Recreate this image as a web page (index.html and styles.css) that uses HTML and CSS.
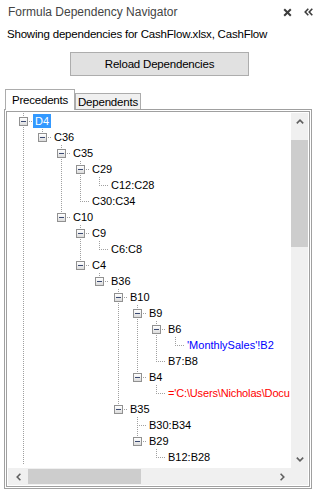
FILE: index.html
```html
<!DOCTYPE html>
<html>
<head>
<meta charset="utf-8">
<title>Formula Dependency Navigator</title>
<link rel="stylesheet" href="styles.css">
</head>
<body>
<div class="header">
  <div class="title">Formula Dependency Navigator</div>
  <div class="actions">
    <svg class="ico" width="9" height="9" viewBox="0 0 9 9"><path d="M1.2 1.2 L7.8 7.8 M7.8 1.2 L1.2 7.8" stroke="#3c3c3c" stroke-width="2" fill="none"/></svg>
    <svg class="ico" width="9" height="8" viewBox="0 0 9 8"><path d="M4.3 0.8 L1.2 4 L4.3 7.2 M8.3 0.8 L5.2 4 L8.3 7.2" stroke="#3c3c3c" stroke-width="1.6" fill="none"/></svg>
  </div>
</div>
<div class="info">Showing dependencies for CashFlow.xlsx, CashFlow</div>
<div class="btn">Reload Dependencies</div>
<div class="tabstrip">
  <div class="tab active">Precedents</div>
  <div class="tab inactive">Dependents</div>
</div>
<div class="panel">
  <div class="tree">
    <div class="content">
      <div class="row"><i class="c t"><b class="tg"></b></i><span class="lbl sel">D4</span></div>
      <div class="row"><i class="c v"></i><i class="c l"><b class="tg"></b></i><span class="lbl">C36</span></div>
      <div class="row"><i class="c v"></i><i class="c"></i><i class="c t"><b class="tg"></b></i><span class="lbl">C35</span></div>
      <div class="row"><i class="c v"></i><i class="c"></i><i class="c v"></i><i class="c t"><b class="tg"></b></i><span class="lbl">C29</span></div>
      <div class="row"><i class="c v"></i><i class="c"></i><i class="c v"></i><i class="c v"></i><i class="c l"></i><span class="lbl">C12:C28</span></div>
      <div class="row"><i class="c v"></i><i class="c"></i><i class="c v"></i><i class="c l"></i><span class="lbl">C30:C34</span></div>
      <div class="row"><i class="c v"></i><i class="c"></i><i class="c l"><b class="tg"></b></i><span class="lbl">C10</span></div>
      <div class="row"><i class="c v"></i><i class="c"></i><i class="c"></i><i class="c t"><b class="tg"></b></i><span class="lbl">C9</span></div>
      <div class="row"><i class="c v"></i><i class="c"></i><i class="c"></i><i class="c v"></i><i class="c l"></i><span class="lbl">C6:C8</span></div>
      <div class="row"><i class="c v"></i><i class="c"></i><i class="c"></i><i class="c l"><b class="tg"></b></i><span class="lbl">C4</span></div>
      <div class="row"><i class="c v"></i><i class="c"></i><i class="c"></i><i class="c"></i><i class="c l"><b class="tg"></b></i><span class="lbl">B36</span></div>
      <div class="row"><i class="c v"></i><i class="c"></i><i class="c"></i><i class="c"></i><i class="c"></i><i class="c t"><b class="tg"></b></i><span class="lbl">B10</span></div>
      <div class="row"><i class="c v"></i><i class="c"></i><i class="c"></i><i class="c"></i><i class="c"></i><i class="c v"></i><i class="c t"><b class="tg"></b></i><span class="lbl">B9</span></div>
      <div class="row"><i class="c v"></i><i class="c"></i><i class="c"></i><i class="c"></i><i class="c"></i><i class="c v"></i><i class="c v"></i><i class="c t"><b class="tg"></b></i><span class="lbl">B6</span></div>
      <div class="row"><i class="c v"></i><i class="c"></i><i class="c"></i><i class="c"></i><i class="c"></i><i class="c v"></i><i class="c v"></i><i class="c v"></i><i class="c l"></i><span class="lbl blue">'MonthlySales'!B2</span></div>
      <div class="row"><i class="c v"></i><i class="c"></i><i class="c"></i><i class="c"></i><i class="c"></i><i class="c v"></i><i class="c v"></i><i class="c l"></i><span class="lbl">B7:B8</span></div>
      <div class="row"><i class="c v"></i><i class="c"></i><i class="c"></i><i class="c"></i><i class="c"></i><i class="c v"></i><i class="c l"><b class="tg"></b></i><span class="lbl">B4</span></div>
      <div class="row"><i class="c v"></i><i class="c"></i><i class="c"></i><i class="c"></i><i class="c"></i><i class="c v"></i><i class="c"></i><i class="c l"></i><span class="lbl red">='C:\Users\Nicholas\Docu</span></div>
      <div class="row"><i class="c v"></i><i class="c"></i><i class="c"></i><i class="c"></i><i class="c"></i><i class="c l"><b class="tg"></b></i><span class="lbl">B35</span></div>
      <div class="row"><i class="c v"></i><i class="c"></i><i class="c"></i><i class="c"></i><i class="c"></i><i class="c"></i><i class="c t"></i><span class="lbl">B30:B34</span></div>
      <div class="row"><i class="c v"></i><i class="c"></i><i class="c"></i><i class="c"></i><i class="c"></i><i class="c"></i><i class="c l"><b class="tg"></b></i><span class="lbl">B29</span></div>
      <div class="row"><i class="c v"></i><i class="c"></i><i class="c"></i><i class="c"></i><i class="c"></i><i class="c"></i><i class="c"></i><i class="c l"></i><span class="lbl">B12:B28</span></div>
    </div>
    <div class="vbar">
      <div class="sbtn"><svg width="8" height="5" viewBox="0 0 8 5"><path d="M0.8 4.4 L4 1.2 L7.2 4.4" stroke="#606060" stroke-width="1.6" fill="none"/></svg></div>
      <div class="vtrack"><div class="vthumb"></div></div>
      <div class="sbtn"><svg width="8" height="5" viewBox="0 0 8 5"><path d="M0.8 0.6 L4 3.8 L7.2 0.6" stroke="#606060" stroke-width="1.6" fill="none"/></svg></div>
    </div>
    <div class="hbar">
      <div class="sbtn hbtn left"><svg width="5" height="8" viewBox="0 0 5 8"><path d="M4.4 0.8 L1.2 4 L4.4 7.2" stroke="#606060" stroke-width="1.6" fill="none"/></svg></div>
      <div class="htrack"><div class="hthumb"></div></div>
      <div class="sbtn hbtn"><svg width="5" height="8" viewBox="0 0 5 8"><path d="M0.6 0.8 L3.8 4 L0.6 7.2" stroke="#606060" stroke-width="1.6" fill="none"/></svg></div>
    </div>
    <div class="corner"></div>
  </div>
</div>
</body>
</html>
```
FILE: styles.css
```css
* { box-sizing: border-box; }
html, body { margin: 0; padding: 0; background: #fff; }
body {
  width: 317px;
  height: 496px;
  overflow: hidden;
  font-family: "Liberation Sans", Arial, sans-serif;
  font-size: 11.5px;
  letter-spacing: -0.2px;
  color: #000;
}
.header {
  display: flex;
  align-items: center;
  height: 21px;
  padding: 3px 4px 0 8px;
}
.title {
  flex: 1;
  font-size: 12px;
  letter-spacing: 0;
  color: #444;
  line-height: 17px;
  white-space: nowrap;
}
.actions { display: flex; align-items: center; gap: 12px; }
.ico { display: block; }
.info {
  margin: 5px 0 0 7px;
  height: 16px;
  line-height: 16px;
  white-space: nowrap;
}
.btn {
  display: flex;
  align-items: center;
  justify-content: center;
  margin: 10px 0 0 70px;
  width: 179px;
  height: 24px;
  border: 1px solid #adadad;
  background: #e1e1e1;
}
.tabstrip {
  display: flex;
  align-items: flex-end;
  margin-top: 13px;
  padding-left: 5px;
  height: 20px;
}
.tab {
  display: flex;
  align-items: center;
  justify-content: center;
  border: 1px solid #acacac;
  border-bottom: none;
}
.tab.active {
  width: 70px;
  height: 21px;
  margin-bottom: -1px;
  background: #fff;
  position: relative;
  z-index: 1;
}
.tab.inactive {
  width: 66px;
  height: 16px;
  background: #f0f0f0;
  padding-top: 1px;
}
.panel {
  margin-left: 4px;
  width: 308px;
  height: 380px;
  border: 1px solid #a0a0a0;
  padding: 1px;
}
.tree {
  height: 100%;
  border: 1px solid #a0a0a0;
  padding: 1px;
  display: grid;
  grid-template-columns: minmax(0, 1fr) 17px;
  grid-template-rows: minmax(0, 1fr) 17px;
}
.content {
  overflow: hidden;
  padding-left: 6px;
}
.row {
  display: flex;
  height: 16px;
  white-space: nowrap;
}
.c {
  display: block;
  flex: none;
  width: 19px;
  height: 16px;
}
.v {
  background: repeating-linear-gradient(to bottom, #a0a0a0 0 1px, transparent 1px 2px) 9px 0 / 1px 16px no-repeat;
}
.t {
  background:
    repeating-linear-gradient(to right, #a0a0a0 0 1px, transparent 1px 2px) 11px 8px / 8px 1px no-repeat,
    repeating-linear-gradient(to bottom, #a0a0a0 0 1px, transparent 1px 2px) 9px 0 / 1px 16px no-repeat;
}
.l {
  background:
    repeating-linear-gradient(to right, #a0a0a0 0 1px, transparent 1px 2px) 11px 8px / 8px 1px no-repeat,
    repeating-linear-gradient(to bottom, #a0a0a0 0 1px, transparent 1px 2px) 9px 0 / 1px 9px no-repeat;
}
.tg {
  display: block;
  width: 9px;
  height: 9px;
  margin: 4px 0 0 5px;
  border: 1px solid #919191;
  background:
    linear-gradient(#3b4a72, #3b4a72) 1px 3px / 5px 1px no-repeat,
    linear-gradient(#ffffff, #dcdcdc);
}
.lbl {
  display: block;
  font-size: 11px;
  letter-spacing: 0;
  padding: 0 2px;
  height: 16px;
  line-height: 16px;
}
.lbl.sel {
  background: #3399ff;
  color: #fff;
  height: 14px;
  line-height: 14px;
  margin-top: 1px;
}
.blue { color: #0000ff; }
.red { color: #ff0000; letter-spacing: -0.15px; padding-right: 0; }
.vbar {
  grid-column: 2;
  grid-row: 1;
  background: #f0f0f0;
  display: flex;
  flex-direction: column;
}
.sbtn {
  flex: none;
  height: 17px;
  display: flex;
  align-items: center;
  justify-content: center;
}
.vtrack { flex: 1; padding-top: 10px; }
.vthumb { height: 107px; background: #cdcdcd; }
.hbar {
  grid-column: 1;
  grid-row: 2;
  background: #f0f0f0;
  display: flex;
}
.hbtn { width: 17px; height: 17px; }
.hbtn.left { padding-left: 3px; }
.htrack { flex: 1; padding: 1px 0 1px 3px; }
.hthumb { width: 113px; height: 100%; background: #cdcdcd; }
.corner { grid-column: 2; grid-row: 2; background: #f0f0f0; }
```
